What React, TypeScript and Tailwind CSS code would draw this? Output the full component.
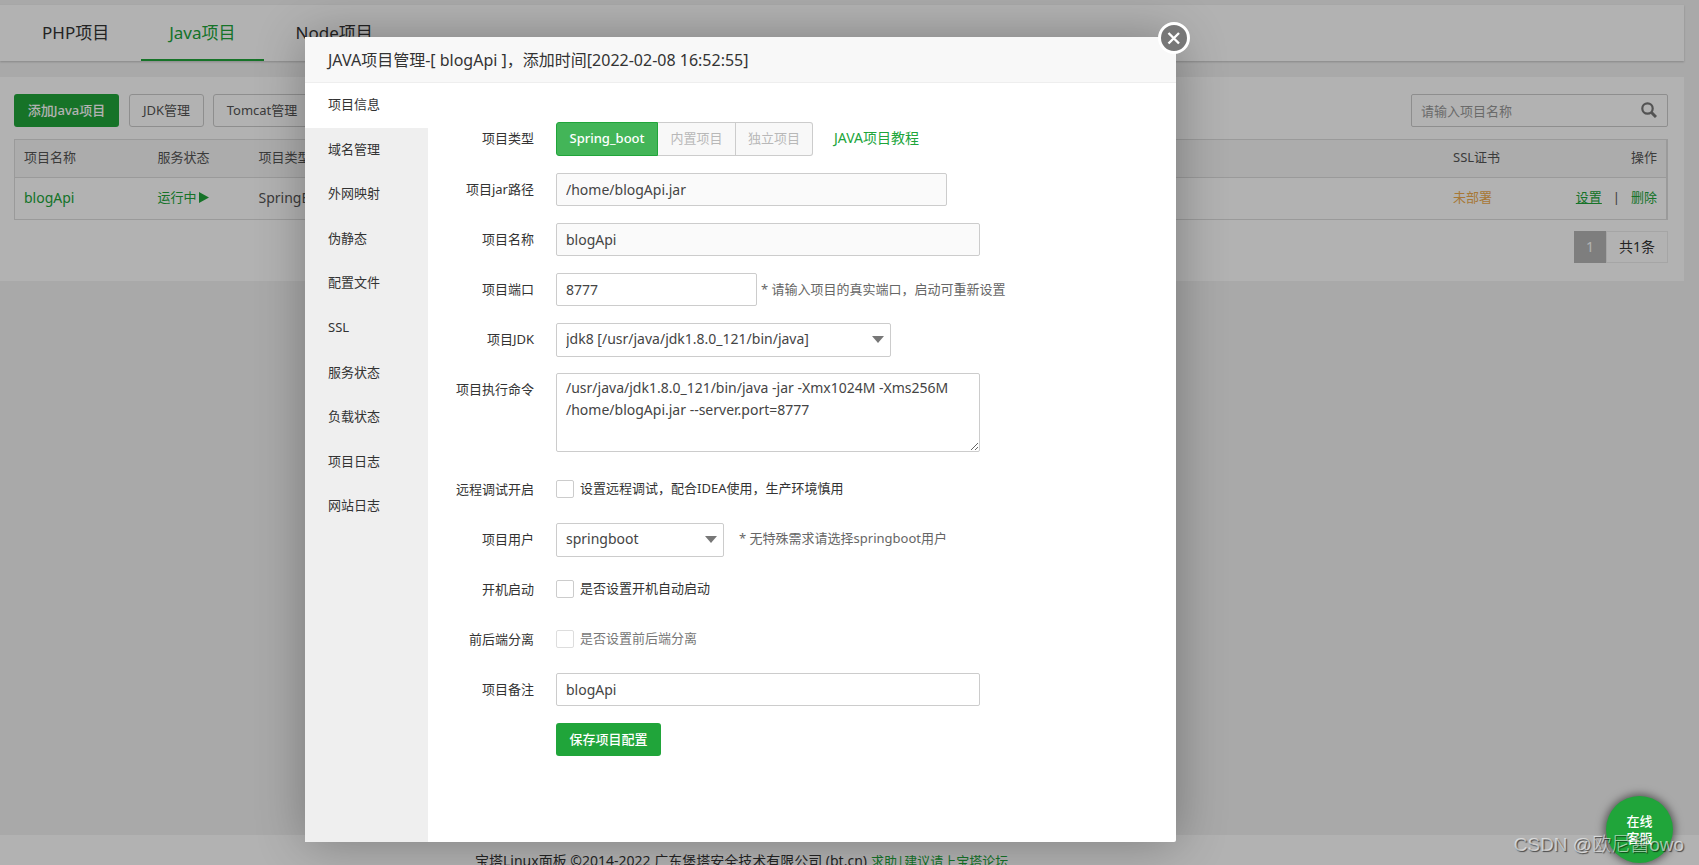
import React from "react";

const menu = [
  "项目信息",
  "域名管理",
  "外网映射",
  "伪静态",
  "配置文件",
  "SSL",
  "服务状态",
  "负载状态",
  "项目日志",
  "网站日志",
];

const tabs = ["PHP项目", "Java项目", "Node项目"];

const field =
  "h-[33px] rounded-xs border border-[#ccc] px-[9px] text-[#444] outline-none";

function Row({
  label,
  htmlFor,
  className = "h-[50px]",
  children,
}: {
  label?: string;
  htmlFor?: string;
  className?: string;
  children: React.ReactNode;
}) {
  return (
    <div className={`flex items-start ${className}`}>
      <label
        htmlFor={htmlFor}
        className="mr-[22px] w-[106px] shrink-0 text-right leading-[33px] text-[#333]"
      >
        {label}
      </label>
      {children}
    </div>
  );
}

function Select({
  id,
  value,
  className,
}: {
  id: string;
  value: string;
  className: string;
}) {
  return (
    <div className={`relative ${className}`}>
      <select
        id={id}
        className="h-[34px] w-full appearance-none rounded-xs border border-[#ccc] bg-white px-[9px] pb-[3px] text-[14px] text-[#444] outline-none"
      >
        <option>{value}</option>
      </select>
      <svg
        viewBox="0 0 12 7"
        className="pointer-events-none absolute top-[13px] right-[7px] h-[7px] w-3"
      >
        <path d="M0 0h12L6 7z" fill="#777" />
      </svg>
    </div>
  );
}

function Check({
  id,
  text,
  disabled = false,
}: {
  id: string;
  text: string;
  disabled?: boolean;
}) {
  return (
    <div className="flex h-8 items-center gap-[6px]">
      <input
        id={id}
        type="checkbox"
        disabled={disabled}
        className="h-[18px] w-[18px] appearance-none rounded-xs border border-[#ccc] bg-white disabled:border-[#ddd]"
      />
      <label
        htmlFor={id}
        className={disabled ? "pb-px text-[#777]" : "pb-px text-[#333]"}
      >
        {text}
      </label>
    </div>
  );
}

function ProjectPage() {
  return (
    <div className="flex h-screen flex-col bg-[#f2f2f2] pt-[5px]">
      <nav className="mr-[15px] flex h-14 shrink-0 gap-1 bg-white pl-[14px] shadow-[0_1px_2px_rgba(0,0,0,0.2)]">
        {tabs.map((tab) => (
          <a
            key={tab}
            href="#"
            className={
              tab === "Java项目"
                ? "border-b-2 border-[#20a53a] px-7 text-[17px] leading-[56px] text-[#20a53a]"
                : "px-7 text-[17px] leading-[56px] text-[#333]"
            }
          >
            {tab}
          </a>
        ))}
      </nav>

      <main className="mt-4 mr-[15px] shrink-0 bg-white pt-[17px] pr-4 pb-[18px] pl-[14px]">
        <div className="flex items-center">
          <button className="h-[33px] w-[105px] rounded-[3px] bg-[#20a53a] font-medium text-white">
            添加Java项目
          </button>
          <button className="ml-[10px] h-[33px] w-[75px] rounded-[3px] border border-[#ccc] text-[#555]">
            JDK管理
          </button>
          <button className="ml-[9px] h-[33px] w-[98px] rounded-[3px] border border-[#ccc] text-[#555]">
            Tomcat管理
          </button>
          <div className="relative ml-auto w-[257px]">
            <input
              aria-label="请输入项目名称"
              placeholder="请输入项目名称"
              className={`${field} w-full placeholder:text-[#999]`}
            />
            <svg
              viewBox="0 0 16 16"
              className="absolute top-2 right-[11px] h-4 w-4"
              fill="none"
              stroke="#777"
            >
              <circle cx="6.5" cy="6.5" r="5.2" strokeWidth="2.2" />
              <path d="M10.5 10.5L15 15" strokeWidth="3" />
            </svg>
          </div>
        </div>

        <table className="mt-3 w-full table-fixed border-collapse border border-r-2 border-[#ddd] text-left text-[#555]">
          <colgroup>
            <col className="w-[134px]" />
            <col className="w-[101px]" />
            <col />
            <col className="w-[113px]" />
            <col className="w-[110px]" />
          </colgroup>
          <thead>
            <tr className="h-[38px] border-b border-[#ddd] bg-[#f7f7f7]">
              <th className="px-[9px] pb-[2px] font-normal">项目名称</th>
              <th className="px-[9px] pb-[2px] font-normal">服务状态</th>
              <th className="px-[9px] pb-[2px] font-normal">项目类型</th>
              <th className="px-[9px] pb-[2px] font-normal">SSL证书</th>
              <th className="px-[9px] pb-[2px] text-right font-normal">操作</th>
            </tr>
          </thead>
          <tbody>
            <tr className="h-[42px]">
              <td className="px-[9px] pb-[2px] text-[14px]">
                <a href="#" className="text-[#20a53a]">
                  blogApi
                </a>
              </td>
              <td className="px-[9px] pb-[2px]">
                <a href="#" className="flex items-center gap-[2px] text-[#20a53a]">
                  运行中
                  <svg viewBox="0 0 10 11" className="h-[11px] w-[10px]">
                    <path d="M0 0l10 5.500L0 11z" fill="#20a53a" />
                  </svg>
                </a>
              </td>
              <td className="px-[9px] pb-[2px] text-[14px]">SpringBoot</td>
              <td className="px-[9px] pb-[2px]">
                <a href="#" className="text-[#f0ad4e]">
                  未部署
                </a>
              </td>
              <td className="px-[9px] pb-[2px]">
                <div className="flex justify-end gap-[11px]">
                  <a href="#" className="text-[#20a53a] underline">
                    设置
                  </a>
                  <span>|</span>
                  <a href="#" className="text-[#20a53a]">
                    删除
                  </a>
                </div>
              </td>
            </tr>
          </tbody>
        </table>

        <div className="mt-[11px] flex justify-end text-[14px] leading-8">
          <span className="w-8 bg-[#b5b5b5] text-center text-white">1</span>
          <span className="h-8 w-[62px] border border-[#ececec] text-center leading-[30px] text-[#333]">
            共1条
          </span>
        </div>
      </main>

      <footer className="mt-auto flex h-[30px] shrink-0 items-start gap-1 overflow-hidden bg-white pt-4 pl-[475px] leading-5 text-[#333]">
        <span className="text-[14px]">
          宝塔Linux面板 ©2014-2022 广东堡塔安全技术有限公司 (bt.cn)
        </span>
        <a href="#" className="text-[#20a53a]">
          求助|建议请上宝塔论坛
        </a>
      </footer>
    </div>
  );
}

function ProjectDialog() {
  return (
    <div
      role="dialog"
      aria-labelledby="dialog-title"
      className="absolute top-[37px] left-[305px] flex min-h-[805px] w-[871px] flex-col rounded-xs bg-white shadow-[1px_1px_50px_rgba(0,0,0,0.3)]"
    >
      <h2
        id="dialog-title"
        className="h-[46px] border-b border-[#eee] bg-[#f8f8f8] pl-[23px] text-[16px] leading-[46px] text-[#333]"
      >
        JAVA项目管理-[ blogApi ]，添加时间[2022-02-08 16:52:55]
      </h2>
      <button
        aria-label="关闭"
        className="absolute -top-[15px] -right-[14px] h-8 w-8"
      >
        <svg viewBox="0 0 32 32" className="h-8 w-8">
          <circle cx="16" cy="16" r="14.500" fill="#777" stroke="#fff" strokeWidth="3" />
          <path
            d="M10.500 11l10.500 10.500M21 11L10.500 21.500"
            stroke="#fff"
            strokeWidth="2.400"
          />
        </svg>
      </button>

      <div className="flex grow">
        <aside className="w-[123px] shrink-0 bg-[#efefef]">
          <nav className="flex h-[446px] flex-col">
            {menu.map((item, i) => (
              <a
                key={item}
                href="#"
                className={`flex flex-1 items-center pb-px pl-[23px] text-[#333] ${i === 0 ? "bg-white" : ""}`}
              >
                {item}
              </a>
            ))}
          </nav>
        </aside>

        <form className="grow pt-[39px]">
          <Row label="项目类型" className="h-[51px]">
            <div className="flex h-[34px]">
              <button
                type="button"
                className="w-[102px] rounded-l-[3px] border border-[#20a53a] bg-[#43b558] font-medium text-white"
              >
                Spring_boot
              </button>
              <button
                type="button"
                disabled
                className="w-[78px] border-y border-r border-[#ccc] bg-[#f8f8f8] text-[#b8b8b8]"
              >
                内置项目
              </button>
              <button
                type="button"
                disabled
                className="w-[77px] rounded-r-[3px] border-y border-r border-[#ccc] bg-[#f8f8f8] text-[#b8b8b8]"
              >
                独立项目
              </button>
            </div>
            <a href="#" className="ml-[21px] text-[14px] leading-[31px] text-[#20a53a]">
              JAVA项目教程
            </a>
          </Row>
          <Row label="项目jar路径" htmlFor="jar">
            <input
              id="jar"
              readOnly
              defaultValue="/home/blogApi.jar"
              className={`${field} w-[391px] bg-[#fafafa] text-[14px]`}
            />
          </Row>
          <Row label="项目名称" htmlFor="name">
            <input
              id="name"
              readOnly
              defaultValue="blogApi"
              className={`${field} w-[424px] bg-[#fafafa] text-[14px]`}
            />
          </Row>
          <Row label="项目端口" htmlFor="port">
            <input
              id="port"
              defaultValue="8777"
              className={`${field} w-[201px] text-[14px]`}
            />
            <span className="ml-1 leading-[33px] text-[#666]">
              * 请输入项目的真实端口，启动可重新设置
            </span>
          </Row>
          <Row label="项目JDK" htmlFor="jdk">
            <Select
              id="jdk"
              value="jdk8 [/usr/java/jdk1.8.0_121/bin/java]"
              className="w-[335px]"
            />
          </Row>
          <Row label="项目执行命令" htmlFor="cmd" className="h-[100px]">
            <textarea
              id="cmd"
              defaultValue={
                "/usr/java/jdk1.8.0_121/bin/java -jar -Xmx1024M -Xms256M /home/blogApi.jar --server.port=8777"
              }
              className="h-[79px] w-[424px] rounded-xs border border-[#ccc] px-[9px] py-[3px] text-[14px] leading-[22px] text-[#444] outline-none"
            />
          </Row>
          <Row label="远程调试开启" htmlFor="debug">
            <Check id="debug" text="设置远程调试，配合IDEA使用，生产环境慎用" />
          </Row>
          <Row label="项目用户" htmlFor="user">
            <Select id="user" value="springboot" className="w-[168px]" />
            <span className="ml-[15px] leading-[31px] text-[#666]">
              * 无特殊需求请选择springboot用户
            </span>
          </Row>
          <Row label="开机启动" htmlFor="boot">
            <Check id="boot" text="是否设置开机自动启动" />
          </Row>
          <Row label="前后端分离" htmlFor="split">
            <Check id="split" text="是否设置前后端分离" disabled />
          </Row>
          <Row label="项目备注" htmlFor="note">
            <input
              id="note"
              defaultValue="blogApi"
              className={`${field} w-[424px] text-[14px]`}
            />
          </Row>
          <Row>
            <button
              type="button"
              className="h-[33px] w-[105px] rounded-[3px] bg-[#20a53a] font-medium text-white"
            >
              保存项目配置
            </button>
          </Row>
        </form>
      </div>
    </div>
  );
}

export default function App() {
  return (
    <div className="relative h-screen overflow-hidden font-['Noto_Sans','Noto_Sans_CJK_SC',sans-serif] text-[13px]">
      <ProjectPage />
      <div className="absolute inset-0 bg-black/30" />
      <ProjectDialog />
      <button className="absolute right-[26px] bottom-[2px] h-[67px] w-[67px] rounded-full bg-[#20a53a] px-5 leading-[17px] font-medium text-white shadow-[0_0_10px_1px_rgba(0,0,0,0.6)]">
        在线客服
      </button>
      <span className="pointer-events-none absolute right-[15px] bottom-[6px] font-['Liberation_Sans','Noto_Sans_CJK_SC',sans-serif] text-[19px] leading-7 font-light text-white/60 [text-shadow:1px_1px_1px_rgba(0,0,0,0.6)]">
        CSDN @欧尼酱owo
      </span>
    </div>
  );
}
